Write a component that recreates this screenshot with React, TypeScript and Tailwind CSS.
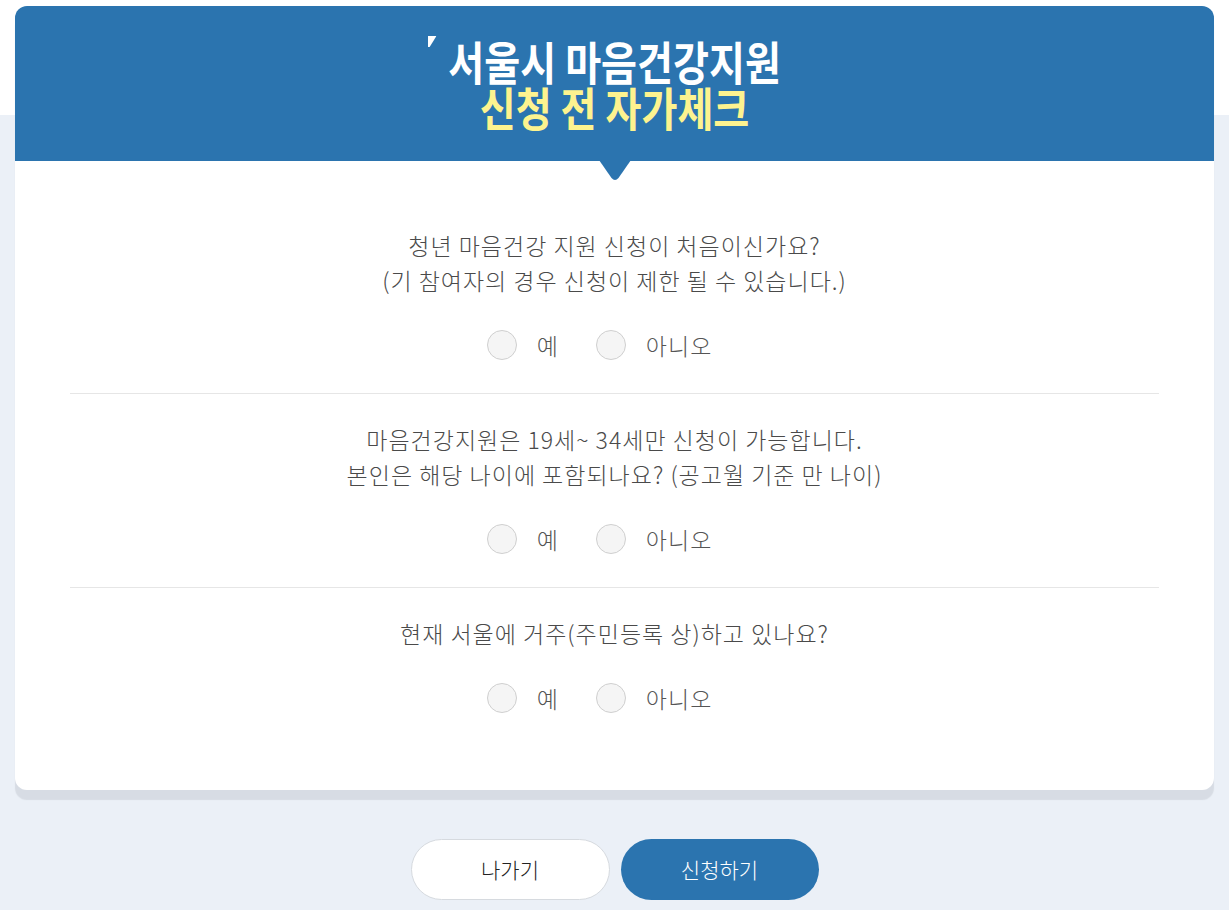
import React from "react";

const font = { fontFamily: '"Noto Sans CJK KR", "Noto Sans", sans-serif' };

function Radio({ label }: { label: string }) {
  return (
    <label className="flex items-center cursor-pointer">
      <span className="w-[30px] h-[30px] rounded-full border border-[#cfcfcf] bg-[#f5f5f5]" />
      <span className="ml-[20px] text-[23px] leading-[30px] tracking-[1px] text-[#555] font-light">{label}</span>
    </label>
  );
}

function Question({ lines, last }: { lines: string[]; last?: boolean }) {
  return (
    <div className={"pt-[28px] pb-[33px] " + (last ? "" : "border-b border-[#e6e6e6]")}>
      <div className="text-center text-[23px] leading-[35px] text-[#4a4a4a] font-light tracking-[1px]">
        {lines.map((l, i) => (
          <div key={i}>{l}</div>
        ))}
      </div>
      <div className="mt-[32px] flex justify-center pr-[30px] gap-[37px]">
        <Radio label="예" />
        <Radio label="아니오" />
      </div>
    </div>
  );
}

export default function App() {
  return (
    <div
      className="min-h-[910px] w-full bg-[linear-gradient(to_bottom,#ffffff_115px,#ebf0f7_115px)] px-[15px] pt-[6px]"
      style={font}
    >
      <div className="rounded-[12px] bg-white shadow-[0_10px_1px_#d7dce4]">
        <div className="relative rounded-t-[12px] bg-[#2b74af] pt-[31px] pb-[32px] flex flex-col items-center">
          <div className="relative text-[46px] leading-[46px] font-bold text-white tracking-[0px] scale-x-[0.85] whitespace-nowrap">
            <svg
              className="absolute left-[-24px] top-[-1px]"
              width="10"
              height="11"
              viewBox="0 0 10 11"
            >
              <polygon points="0,0 10,0 2,11 0,11" fill="#ffffff" />
            </svg>
            서울시 마음건강지원
          </div>
          <div className="text-[46px] leading-[46px] font-bold text-[#fdf38f] tracking-[0px] scale-x-[0.85] whitespace-nowrap">
            신청 전 자가체크
          </div>
          <svg
            className="absolute left-1/2 -translate-x-1/2 bottom-[-20px]"
            width="32"
            height="21"
            viewBox="0 0 32 21"
          >
            <path d="M0 0 H32 L19.5 18 Q16 22 12.5 18 Z" fill="#2b74af" />
          </svg>
        </div>
        <div className="px-[55px] pt-[39px] pb-[44px]">
          <Question
            lines={[
              "청년 마음건강 지원 신청이 처음이신가요?",
              "(기 참여자의 경우 신청이 제한 될 수 있습니다.)",
            ]}
          />
          <Question
            lines={[
              "마음건강지원은 19세~ 34세만 신청이 가능합니다.",
              "본인은 해당 나이에 포함되나요? (공고월 기준 만 나이)",
            ]}
          />
          <Question lines={["현재 서울에 거주(주민등록 상)하고 있나요?"]} last />
        </div>
      </div>
      <div className="mt-[49px] flex justify-center gap-[11px]">
        <button className="w-[199px] h-[61px] rounded-full border border-[#d6dadf] bg-white text-[21px] text-[#222] font-light">
          나가기
        </button>
        <button className="w-[198px] h-[61px] rounded-full bg-[#2b74af] text-[21px] text-white font-light">
          신청하기
        </button>
      </div>
    </div>
  );
}
